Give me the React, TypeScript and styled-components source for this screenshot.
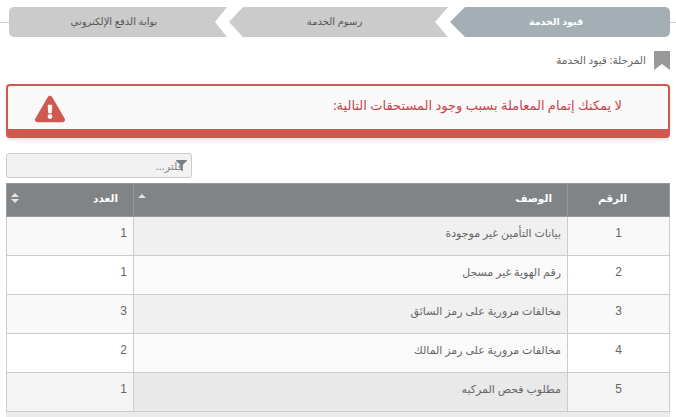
import styled, { createGlobalStyle } from 'styled-components'
import { FaExclamationTriangle, FaFilter } from 'react-icons/fa'

const GlobalStyle = createGlobalStyle`
  html, body {
    margin: 0;
    background: #fff;
    overflow: hidden;
    font-family: "Noto Sans", "DejaVu Sans", "Liberation Sans", sans-serif;
  }
`

const Page = styled.div`
  direction: rtl;
  width: 676px;
  height: 417px;
  overflow: hidden;
  display: flex;
  flex-direction: column;
  & > * {
    flex-shrink: 0;
  }
`

const Stepper = styled.div`
  display: flex;
  align-items: center;
  gap: 2px;
  margin-top: 7px;
  height: 30px;
`

const Stub = styled.span<{ $w: number }>`
  width: ${(p) => p.$w}px;
  margin: 0 -2px;
  height: 1px;
  background: #ccc;
`

const Step = styled.div<{ $w: number; $active?: boolean; $first?: boolean; $last?: boolean }>`
  width: ${(p) => p.$w}px;
  height: 30px;
  display: flex;
  align-items: center;
  justify-content: center;
  padding: 0 8px 2px 0;
  box-sizing: border-box;
  font-size: ${(p) => (p.$active ? '9.5px' : '10px')};
  background: ${(p) => (p.$active ? '#a3aeb5' : '#cbcbcb')};
  color: ${(p) => (p.$active ? '#fff' : '#555')};
  font-weight: ${(p) => (p.$active ? 700 : 400)};
  border-radius: ${(p) => (p.$first ? '0 5px 5px 0' : p.$last ? '5px 0 0 5px' : '0')};
  clip-path: ${(p) =>
    p.$first
      ? 'polygon(15px 0, 100% 0, 100% 100%, 15px 100%, 0 50%)'
      : p.$last
        ? 'polygon(0 0, 100% 0, calc(100% - 12px) 50%, 100% 100%, 0 100%)'
        : 'polygon(14px 0, 100% 0, calc(100% - 13px) 50%, 100% 100%, 14px 100%, 0 50%)'};
`

const Stage = styled.div`
  display: flex;
  align-items: center;
  gap: 8px;
  margin: 13px 6px 0 0;
  height: 20px;
  font-size: 10.5px;
  color: #666;
`

const BookmarkIcon = styled.svg`
  width: 16px;
  height: 19px;
  fill: #999;
`

const Alert = styled.div`
  display: flex;
  align-items: flex-start;
  justify-content: space-between;
  box-sizing: border-box;
  margin: 14px 6px 0;
  height: 54px;
  padding: 10px 46px 0 27px;
  background: #f9f9f9;
  border: 2px solid #d0594f;
  border-bottom-width: 9px;
  border-radius: 4px;
  box-shadow: 0 2px 3px rgba(0, 0, 0, 0.12);
  color: #c7464b;
  font-size: 13px;
  line-height: 18px;
`

const AlertIcon = styled(FaExclamationTriangle)`
  width: 30px;
  height: 30px;
  margin-top: -2px;
  color: #d0594f;
`

const Filter = styled.div`
  display: flex;
  align-items: center;
  box-sizing: border-box;
  align-self: flex-end;
  width: 186px;
  height: 25px;
  margin: 15px 0 0 6px;
  padding-right: 4px;
  background: #f2f2f2;
  border: 1px solid #ccc;
  border-radius: 3px;
  color: #888;
  font-size: 11px;
`

const FilterIcon = styled(FaFilter)`
  width: 11px;
  height: 11px;
  margin-left: -7px;
  color: #7b7f82;
`

const Table = styled.table`
  border-collapse: collapse;
  table-layout: fixed;
  width: 664px;
  margin: 5px 6px 0;
  font-size: 11px;
  color: #666;
`

const HeadCell = styled.th<{ $w?: number; $center?: boolean }>`
  box-sizing: border-box;
  height: 33px;
  width: ${(p) => (p.$w ? `${p.$w}px` : 'auto')};
  padding: 0;
  background: #808487;
  color: #fff;
  font-weight: 700;
  font-size: 10.5px;
  border: 1px solid #999;
  text-align: ${(p) => (p.$center ? 'center' : 'right')};
`

const HeadInner = styled.div<{ $center?: boolean }>`
  display: flex;
  align-items: center;
  justify-content: ${(p) => (p.$center ? 'center' : 'space-between')};
  padding: ${(p) => (p.$center ? '0 12px 5px 0' : '0 15px 5px 4px')};
`

const SortIcon = styled.svg`
  width: 8px;
  height: 12px;
  fill: #e4e4e4;
`

const Cell = styled.td<{ $bg: string; $align?: string; $num?: boolean }>`
  box-sizing: border-box;
  height: 39px;
  padding: 0 6px 7px;
  background: ${(p) => p.$bg};
  border: 1px solid #ccc;
  text-align: ${(p) => p.$align ?? 'right'};
  font-family: ${(p) => (p.$num ? '"Liberation Sans", sans-serif' : 'inherit')};
  font-size: ${(p) => (p.$num ? '12px' : '11px')};
`

const Footer = styled.div`
  margin: 0 6px;
  flex: 1;
  background: #ebebeb;
`

const rows = [
  { n: 1, text: 'بيانات التأمين غير موجودة', count: 1, bg: '#f9f9f9', sorted: '#f0f0f0' },
  { n: 2, text: 'رقم الهوية غير مسجل', count: 1, bg: '#fff', sorted: '#fafafa' },
  { n: 3, text: 'مخالفات مرورية على رمز السائق', count: 3, bg: '#f9f9f9', sorted: '#f0f0f0' },
  { n: 4, text: 'مخالفات مرورية على رمز المالك', count: 2, bg: '#fff', sorted: '#fafafa' },
  { n: 5, text: 'مطلوب فحص المركبه', count: 1, bg: '#f5f5f5', sorted: '#e9e9e9' },
]

export default function App() {
  return (
    <Page>
      <GlobalStyle />
      <Stepper>
        <Stub $w={8} />
        <Step $first $active $w={220}>قيود الخدمة</Step>
        <Step $w={219}>رسوم الخدمة</Step>
        <Step $last $w={218}>بوابة الدفع الإلكتروني</Step>
        <Stub $w={10} />
      </Stepper>
      <Stage>
        <BookmarkIcon viewBox="0 0 16 19">
          <path d="M0 0h16v19l-8-6-8 6z" />
        </BookmarkIcon>
        المرحلة: قيود الخدمة
      </Stage>
      <Alert>
        لا يمكنك إتمام المعاملة بسبب وجود المستحقات التالية:
        <AlertIcon />
      </Alert>
      <Filter>
        <FilterIcon />
        فلتر...
      </Filter>
      <Table>
        <thead>
          <tr>
            <HeadCell $w={102} $center>
              <HeadInner $center>الرقم</HeadInner>
            </HeadCell>
            <HeadCell>
              <HeadInner>
                الوصف
                <SortIcon viewBox="0 0 8 12">
                  <path d="M0 6l4-4 4 4z" />
                </SortIcon>
              </HeadInner>
            </HeadCell>
            <HeadCell $w={127}>
              <HeadInner>
                العدد
                <SortIcon viewBox="0 0 8 12">
                  <path d="M0 5l4-4 4 4zM0 7l4 4 4-4z" />
                </SortIcon>
              </HeadInner>
            </HeadCell>
          </tr>
        </thead>
        <tbody>
          {rows.map((r) => (
            <tr key={r.n}>
              <Cell $bg={r.bg} $align="center" $num>{r.n}</Cell>
              <Cell $bg={r.sorted}>{r.text}</Cell>
              <Cell $bg={r.bg} $num>{r.count}</Cell>
            </tr>
          ))}
        </tbody>
      </Table>
      <Footer />
    </Page>
  )
}
